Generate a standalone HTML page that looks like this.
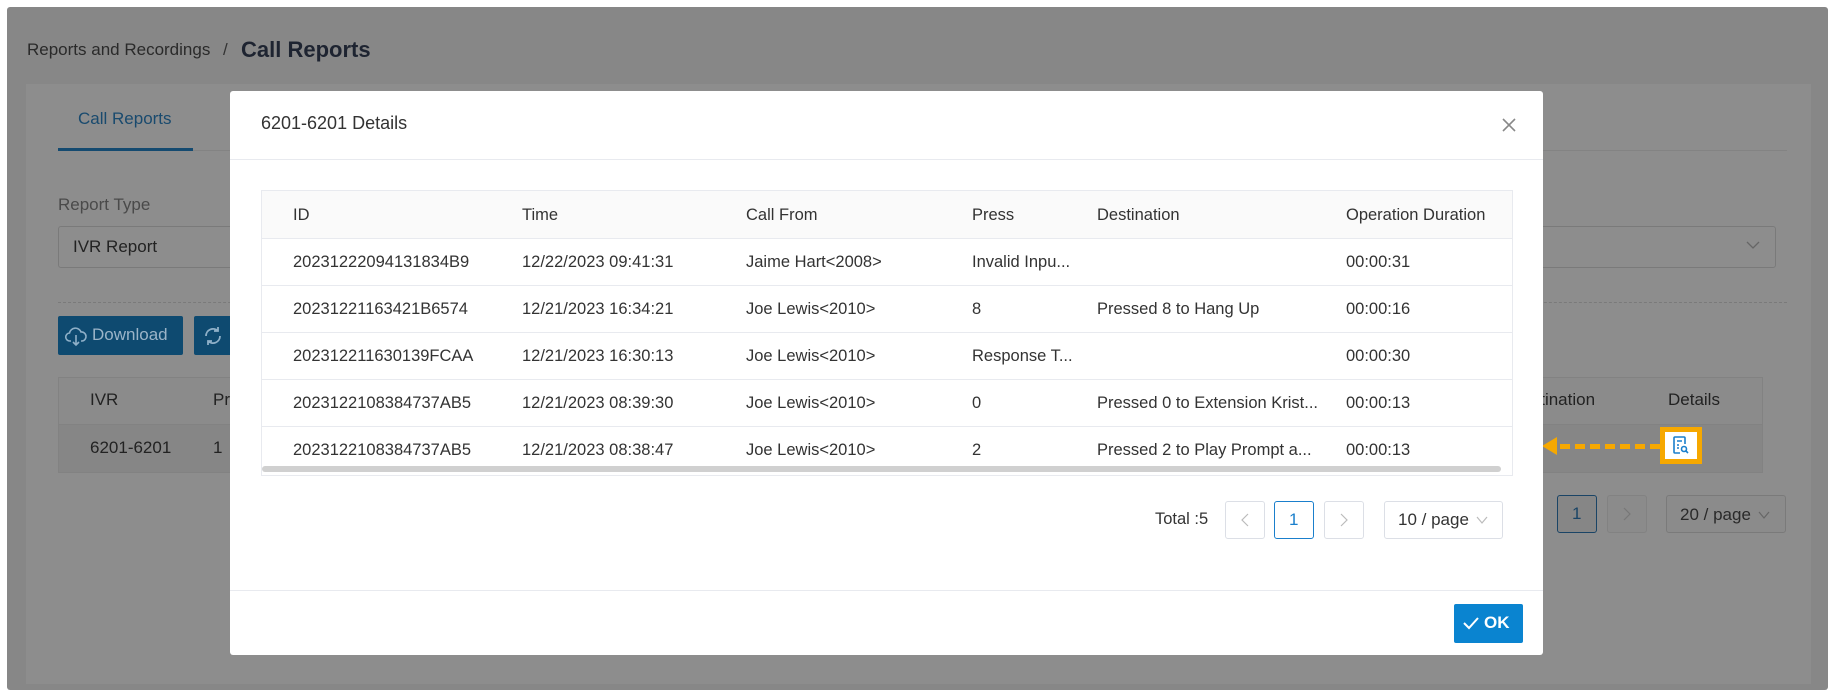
<!DOCTYPE html>
<html><head><meta charset="utf-8"><style>
*{box-sizing:border-box;margin:0;padding:0}
body{width:1834px;height:695px;background:#fff;font-family:"Liberation Sans",sans-serif;position:relative;overflow:hidden}
.abs{position:absolute}
.page{left:7px;top:7px;width:1821px;height:683px;background:#878787;border-radius:3px}
.card{left:26px;top:84px;width:1785px;height:600px;background:#8d8d8d}
.t{position:absolute;white-space:nowrap}
.modal{left:230px;top:91px;width:1313px;height:564px;background:#fff;border-radius:3px}
.cell{position:absolute;font-size:16.5px;color:#333;white-space:nowrap}
.hl{position:absolute;left:0;width:1251px;height:1px;background:#e8eaef}
.pg{position:absolute;border:1px solid #dcdfe6;border-radius:3px;height:38px;background:#fff}
</style></head><body>
<div class="abs page"></div>
<div class="t" style="left:27px;top:40px;font-size:17px;color:#2a2a2a">Reports and Recordings</div>
<div class="t" style="left:223px;top:40px;font-size:17px;color:#333">/</div>
<div class="t" style="left:241px;top:37px;font-size:22px;font-weight:bold;color:#1e2431">Call Reports</div>
<div class="abs card"></div>
<div class="t" style="left:78px;top:109px;font-size:17px;color:#194a6e">Call Reports</div>
<div class="abs" style="left:58px;top:150px;width:1729px;height:1px;background:#838383"></div>
<div class="abs" style="left:58px;top:148px;width:135px;height:3px;background:#144a70"></div>
<div class="t" style="left:58px;top:195px;font-size:17px;color:#4a4a4a">Report Type</div>
<div class="abs" style="left:58px;top:226px;width:1718px;height:42px;border:1px solid #7a7a7a;border-radius:3px"></div>
<div class="t" style="left:73px;top:237px;font-size:17px;color:#222">IVR Report</div>
<svg class="abs" style="left:1746px;top:240px" width="14" height="10" viewBox="0 0 14 10" fill="none" stroke="#666" stroke-width="1.3"><path d="M1 2l6 6 6-6"/></svg>
<div class="abs" style="left:58px;top:302px;width:1729px;border-top:1px dashed #7a7a7a"></div>
<div class="abs" style="left:58px;top:316px;width:125px;height:39px;background:#0e4a70;border-radius:2px"></div>
<svg class="abs" style="left:64px;top:324px" width="24" height="24" viewBox="0 0 24 24" fill="none" stroke="#8fb0c8" stroke-width="1.6"><path d="M7 17H6a4 4 0 0 1-.5-8A6 6 0 0 1 17 8a4.5 4.5 0 0 1 1 9h-1M12 11v10M9 18l3 3 3-3"/></svg>
<div class="t" style="left:92px;top:325px;font-size:17px;color:#9bb4c8">Download</div>
<div class="abs" style="left:194px;top:316px;width:40px;height:39px;background:#0e4a70;border-radius:2px"></div>
<svg class="abs" style="left:201px;top:324px" width="24" height="24" viewBox="0 0 24 24" fill="none" stroke="#8fb0c8" stroke-width="1.8"><path d="M19 12a7 7 0 0 1-12 5M5 12a7 7 0 0 1 12-5M17 3v4h-4M7 21v-4h4"/></svg>
<div class="abs" style="left:58px;top:377px;width:1705px;height:96px;border:1px solid #828282;background:#8b8b8b"></div>
<div class="abs" style="left:59px;top:424px;width:1703px;height:1px;background:#828282"></div>
<div class="abs" style="left:59px;top:425px;width:1703px;height:47px;background:#868686"></div>
<div class="t" style="left:90px;top:390px;font-size:17px;color:#222">IVR</div>
<div class="t" style="left:213px;top:390px;font-size:17px;color:#222">Pr</div>
<div class="t" style="left:90px;top:438px;font-size:17px;color:#222">6201-6201</div>
<div class="t" style="left:213px;top:438px;font-size:17px;color:#222">1</div>
<div class="t" style="left:1510px;top:390px;font-size:17px;color:#222">Destination</div>
<div class="t" style="left:1668px;top:390px;font-size:17px;color:#222">Details</div>
<div class="abs" style="left:1660px;top:427px;width:42px;height:37px;border:5px solid #f6a800;background:#fff"></div>
<svg class="abs" style="left:1670px;top:434px" width="22" height="22" viewBox="0 0 22 22" fill="none" stroke="#1a7fcc" stroke-width="1.6"><path d="M15 10V4a1 1 0 0 0-1-1H5a1 1 0 0 0-1 1v14a1 1 0 0 0 1 1h5M7 7h5M7 11h2M7 14h2"/><circle cx="14" cy="15" r="2.5"/><path d="M16 17l2 2"/></svg>
<div class="abs" style="left:1560px;top:444px;width:100px;border-top:5px dashed #f6a800"></div>
<svg class="abs" style="left:1542px;top:437px" width="20" height="20"><path d="M0 9L15 0v18z" fill="#f6a800"/></svg>
<div class="pg" style="left:1557px;top:495px;width:40px;border-color:#1a4466;background:#868686"></div>
<div class="t" style="left:1572px;top:504px;font-size:17px;color:#1a4466">1</div>
<div class="pg" style="left:1607px;top:495px;width:40px;border-color:#828282;background:#8b8b8b"></div>
<svg class="abs" style="left:1623px;top:507px" width="8" height="14" viewBox="0 0 8 14" fill="none" stroke="#777" stroke-width="1.2"><path d="M1 1l6 6-6 6"/></svg>
<div class="pg" style="left:1666px;top:495px;width:120px;border-color:#7a7a7a;background:#8b8b8b"></div>
<div class="t" style="left:1680px;top:505px;font-size:17px;color:#2a2a2a">20 / page</div>
<svg class="abs" style="left:1758px;top:511px" width="12" height="9" viewBox="0 0 12 9" fill="none" stroke="#666" stroke-width="1.2"><path d="M1 1l5 6 5-6"/></svg>

<div class="abs modal">
<div class="t" style="left:31px;top:22px;font-size:18px;color:#333">6201-6201 Details</div>
<svg class="abs" style="left:1271px;top:26px" width="16" height="16" viewBox="0 0 16 16" stroke="#888" stroke-width="1.6"><path d="M2 2l12 12M14 2L2 14"/></svg>
<div class="abs" style="left:0;top:68px;width:1313px;height:1px;background:#e8eaef"></div>
<div class="abs" style="left:31px;top:99px;width:1252px;height:286px;border:1px solid #e8eaef">
<div class="abs" style="left:0;top:0;width:1250px;height:47px;background:#fafafa"></div>
<div class="hl" style="top:47px"></div><div class="hl" style="top:94px"></div><div class="hl" style="top:141px"></div><div class="hl" style="top:188px"></div><div class="hl" style="top:235px"></div>
<div class="abs" style="left:0;top:275px;width:1239px;height:6px;background:#d0d0d0;border-radius:3px"></div>
</div>
<div class="cell" style="left:63px;top:115px">ID</div><div class="cell" style="left:292px;top:115px">Time</div><div class="cell" style="left:516px;top:115px">Call From</div><div class="cell" style="left:742px;top:115px">Press</div><div class="cell" style="left:867px;top:115px">Destination</div><div class="cell" style="left:1116px;top:115px">Operation Duration</div>

<div class="cell" style="left:63px;top:162px">20231222094131834B9</div><div class="cell" style="left:292px;top:162px">12/22/2023 09:41:31</div><div class="cell" style="left:516px;top:162px">Jaime Hart&lt;2008&gt;</div><div class="cell" style="left:742px;top:162px">Invalid Inpu...</div><div class="cell" style="left:1116px;top:162px">00:00:31</div>

<div class="cell" style="left:63px;top:209px">20231221163421B6574</div><div class="cell" style="left:292px;top:209px">12/21/2023 16:34:21</div><div class="cell" style="left:516px;top:209px">Joe Lewis&lt;2010&gt;</div><div class="cell" style="left:742px;top:209px">8</div><div class="cell" style="left:867px;top:209px">Pressed 8 to Hang Up</div><div class="cell" style="left:1116px;top:209px">00:00:16</div>

<div class="cell" style="left:63px;top:256px">202312211630139FCAA</div><div class="cell" style="left:292px;top:256px">12/21/2023 16:30:13</div><div class="cell" style="left:516px;top:256px">Joe Lewis&lt;2010&gt;</div><div class="cell" style="left:742px;top:256px">Response T...</div><div class="cell" style="left:1116px;top:256px">00:00:30</div>

<div class="cell" style="left:63px;top:303px">2023122108384737AB5</div><div class="cell" style="left:292px;top:303px">12/21/2023 08:39:30</div><div class="cell" style="left:516px;top:303px">Joe Lewis&lt;2010&gt;</div><div class="cell" style="left:742px;top:303px">0</div><div class="cell" style="left:867px;top:303px">Pressed 0 to Extension Krist...</div><div class="cell" style="left:1116px;top:303px">00:00:13</div>

<div class="cell" style="left:63px;top:350px">2023122108384737AB5</div><div class="cell" style="left:292px;top:350px">12/21/2023 08:38:47</div><div class="cell" style="left:516px;top:350px">Joe Lewis&lt;2010&gt;</div><div class="cell" style="left:742px;top:350px">2</div><div class="cell" style="left:867px;top:350px">Pressed 2 to Play Prompt a...</div><div class="cell" style="left:1116px;top:350px">00:00:13</div>

<div class="cell" style="left:925px;top:419px">Total :5</div>
<div class="pg" style="left:995px;top:410px;width:40px"></div>
<svg class="abs" style="left:1011px;top:422px" width="8" height="14" viewBox="0 0 8 14" fill="none" stroke="#bbb" stroke-width="1.2"><path d="M7 1L1 7l6 6"/></svg>
<div class="pg" style="left:1044px;top:410px;width:40px;border-color:#1a7fcc"></div><div class="t" style="left:1059px;top:419px;font-size:17px;color:#1a7fcc">1</div>
<div class="pg" style="left:1094px;top:410px;width:40px"></div>
<svg class="abs" style="left:1110px;top:422px" width="8" height="14" viewBox="0 0 8 14" fill="none" stroke="#bbb" stroke-width="1.2"><path d="M1 1l6 6-6 6"/></svg>
<div class="pg" style="left:1154px;top:410px;width:119px"></div><div class="t" style="left:1168px;top:419px;font-size:17px;color:#333">10 / page</div>
<svg class="abs" style="left:1246px;top:425px" width="12" height="9" viewBox="0 0 12 9" fill="none" stroke="#bbb" stroke-width="1.2"><path d="M1 1l5 6 5-6"/></svg>
<div class="abs" style="left:0;top:499px;width:1313px;height:1px;background:#e8eaef"></div>
<div class="abs" style="left:1224px;top:513px;width:69px;height:39px;background:#0a84d0;border-radius:2px"></div>
<svg class="abs" style="left:1232px;top:524px" width="18" height="16" viewBox="0 0 18 16" fill="none" stroke="#fff" stroke-width="2"><path d="M2 8l5 5L16 3"/></svg>
<div class="t" style="left:1254px;top:522px;font-size:17px;font-weight:bold;color:#fff">OK</div>
</div>
</body></html>
